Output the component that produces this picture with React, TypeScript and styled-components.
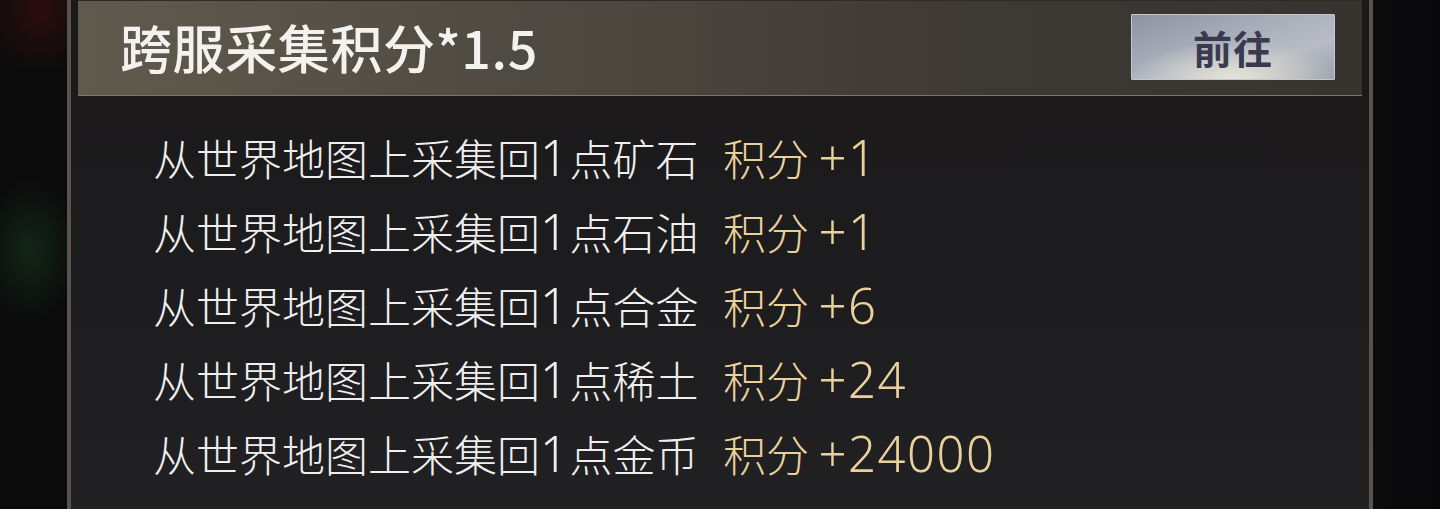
import React from "react";
import styled, { createGlobalStyle } from "styled-components";

const GlobalStyle = createGlobalStyle`
  html, body {
    margin: 0;
    padding: 0;
    background: #0a0a0b;
  }
  body {
    font-family: "Noto Sans CJK SC", "Noto Sans", sans-serif;
  }
`;

const Screen = styled.div`
  display: flex;
  width: 1440px;
  height: 509px;
  overflow: hidden;
`;

const SideLeft = styled.div`
  width: 67px;
  flex-shrink: 0;
  background:
    radial-gradient(ellipse 60px 90px at 30px 250px, rgba(22, 48, 28, 0.7), transparent 80%),
    radial-gradient(ellipse 70px 80px at 40px 10px, rgba(52, 14, 14, 0.8), transparent 80%),
    #0b0b0c;
`;

const SideRight = styled.div`
  flex: 1;
  background: linear-gradient(90deg, #0c0c0d, #08080a);
`;

const Panel = styled.div`
  width: 1298px;
  flex-shrink: 0;
  border-left: 4px solid #57534d;
  border-right: 4px solid #57534d;
  background: linear-gradient(180deg, #1b191a 0%, #1d1c1e 60%, #212022 100%);
  display: flex;
  flex-direction: column;
`;

const Header = styled.div`
  margin: 0 7px;
  height: 96px;
  border-top: 1px solid #2e2b27;
  border-bottom: 1px solid #7b766a;
  box-sizing: border-box;
  background: linear-gradient(90deg, #605a4e 0%, #4f4a41 35%, #3d3933 70%, #37342f 100%);
  display: flex;
  align-items: center;
  justify-content: space-between;
  padding: 0 27px 0 42px;
`;

const Title = styled.h1`
  margin: -3px 0 0;
  font-size: 52px;
  font-weight: 500;
  color: #f4f2ee;
  line-height: 1;
  letter-spacing: 0.6px;
`;

const GoButton = styled.button`
  width: 204px;
  height: 66px;
  margin-top: -3px;
  border: 1px solid #c3c7cf;
  border-radius: 1px;
  background:
    radial-gradient(ellipse 140px 50px at 50% 100%, rgba(232, 230, 218, 0.95), transparent 75%),
    linear-gradient(160deg, #8c93a2 0%, #a7adb9 40%, #b9bcc4 70%, #9aa0ac 100%);
  color: #393a4e;
  font-family: "Noto Sans CJK SC", sans-serif;
  font-size: 39px;
  font-weight: 700;
  letter-spacing: 1px;
  cursor: pointer;
  padding: 0;
`;

const List = styled.div`
  display: grid;
  grid-template-columns: 570px auto;
  grid-auto-rows: 74px;
  align-items: center;
  padding: 24px 0 0 82px;
`;

const Label = styled.span`
  font-size: 43px;
  font-weight: 300;
  color: #efefef;
  line-height: 1;
  white-space: nowrap;
`;

const Score = styled(Label)`
  color: #e9d19c;
`;

const Num = styled.span`
  font-family: "Noto Sans", sans-serif;
  font-size: 49px;
  font-weight: 300;
  letter-spacing: 1.5px;
`;

const rows = [
  { item: "矿石", score: "+1" },
  { item: "石油", score: "+1" },
  { item: "合金", score: "+6" },
  { item: "稀土", score: "+24" },
  { item: "金币", score: "+24000" },
];

export default function App() {
  return (
    <>
      <GlobalStyle />
      <Screen>
        <SideLeft />
        <Panel>
          <Header>
            <Title>跨服采集积分*1.5</Title>
            <GoButton>前往</GoButton>
          </Header>
          <List>
            {rows.map((r) => (
              <React.Fragment key={r.item}>
                <Label>
                  从世界地图上采集回<Num>1</Num>点{r.item}
                </Label>
                <Score>
                  积分 <Num>{r.score}</Num>
                </Score>
              </React.Fragment>
            ))}
          </List>
        </Panel>
        <SideRight />
      </Screen>
    </>
  );
}
